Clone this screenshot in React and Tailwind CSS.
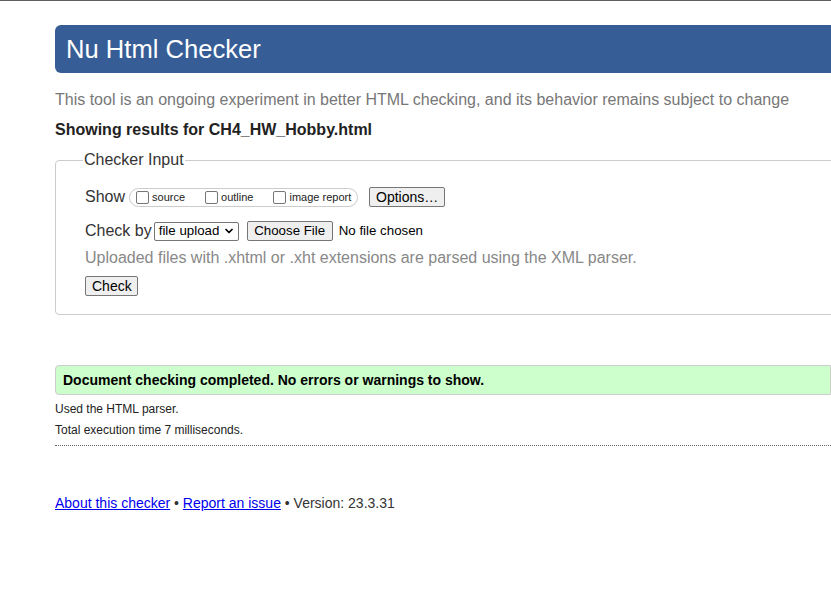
import { ChevronDown } from "lucide-react"

const btn =
  "h-5 px-[6px] bg-[#efefef] border border-[#767676] rounded-[2px] text-[13.3px] leading-none text-black"

function Box({ label }) {
  return (
    <label className="flex items-center text-[11px] text-[#222]">
      <span className="w-[13px] h-[13px] border border-[#767676] rounded-[2px] bg-white mr-[3px] mt-[1px]" />
      {label}
    </label>
  )
}

export default function App() {
  return (
    <div className="min-h-[601px] bg-white border-t border-[#5f5f5f] overflow-hidden font-['Liberation_Sans',Arial,sans-serif] text-[#333]">
      <div className="ml-[55px] w-[800px]">
        <h1 className="mt-[24px] h-[48px] bg-[#365d95] rounded-l-[6px] flex items-center pl-[11px] text-[25.6px] text-white">
          Nu Html Checker
        </h1>

        <p className="mt-[17px] text-[16px] leading-[20px] text-[#777]">
          This tool is an ongoing experiment in better HTML checking, and its behavior remains subject to change
        </p>
        <p className="mt-[10px] text-[16px] leading-[20px] font-bold text-[#222]">
          Showing results for CH4_HW_Hobby.html
        </p>

        <fieldset className="mt-[10px] border border-[#ccc] rounded-[4px] pl-[29px] pb-[16px]">
          <legend className="ml-[-2px] px-[1px] text-[16px] leading-[20px] text-[#333]">Checker Input</legend>

          <div className="mt-[17px] flex items-center h-[20px]">
            <span className="text-[16px] mr-[4px]">Show</span>
            <div className="h-[19px] w-[229px] border border-[#ccc] rounded-full flex items-center pl-[6px] gap-[20px]">
              <Box label="source" />
              <Box label="outline" />
              <Box label="image report" />
            </div>
            <button className={`${btn} ml-[11px] w-[76px] text-[14px]`}>Options…</button>
          </div>

          <div className="mt-[14px] flex items-center h-[20px]">
            <span className="text-[16px] mr-[2px]">Check by</span>
            <div className="h-[19px] w-[85px] border border-[#767676] rounded-[2px] flex items-center justify-between pl-[4px] pr-[3px] text-[13.3px] text-black">
              file upload
              <ChevronDown size={12} strokeWidth={3.5} />
            </div>
            <button className={`${btn} ml-[8px] w-[86px]`}>Choose File</button>
            <span className="ml-[6px] text-[13.3px] text-black">No file chosen</span>
          </div>

          <p className="mt-[7px] text-[16px] leading-[20px] text-[#888]">
            Uploaded files with .xhtml or .xht extensions are parsed using the XML parser.
          </p>

          <button className={`${btn} mt-[8px] w-[53px] text-[14px]`}>Check</button>
        </fieldset>

        <div className="mt-[50px] h-[30px] bg-[#ccffcc] border border-[#ccc] rounded-l-[4px] flex items-center pl-[7px] w-[776px]">
          <span className="text-[14px] font-bold text-black">
            Document checking completed. No errors or warnings to show.
          </span>
        </div>

        <p className="mt-[7px] text-[12px] leading-[14px] text-[#222]">Used the HTML parser.</p>
        <p className="mt-[7px] text-[12px] leading-[14px] text-[#222]">Total execution time 7 milliseconds.</p>
        <div className="mt-[8px] w-[776px] border-t border-dotted border-[#666]" />

        <p className="mt-[49px] text-[14px] leading-[16px] text-[#333]">
          <a href="#" className="text-[#0000ee] underline">About this checker</a> •{" "}
          <a href="#" className="text-[#0000ee] underline">Report an issue</a> • Version: 23.3.31
        </p>
      </div>
    </div>
  )
}
